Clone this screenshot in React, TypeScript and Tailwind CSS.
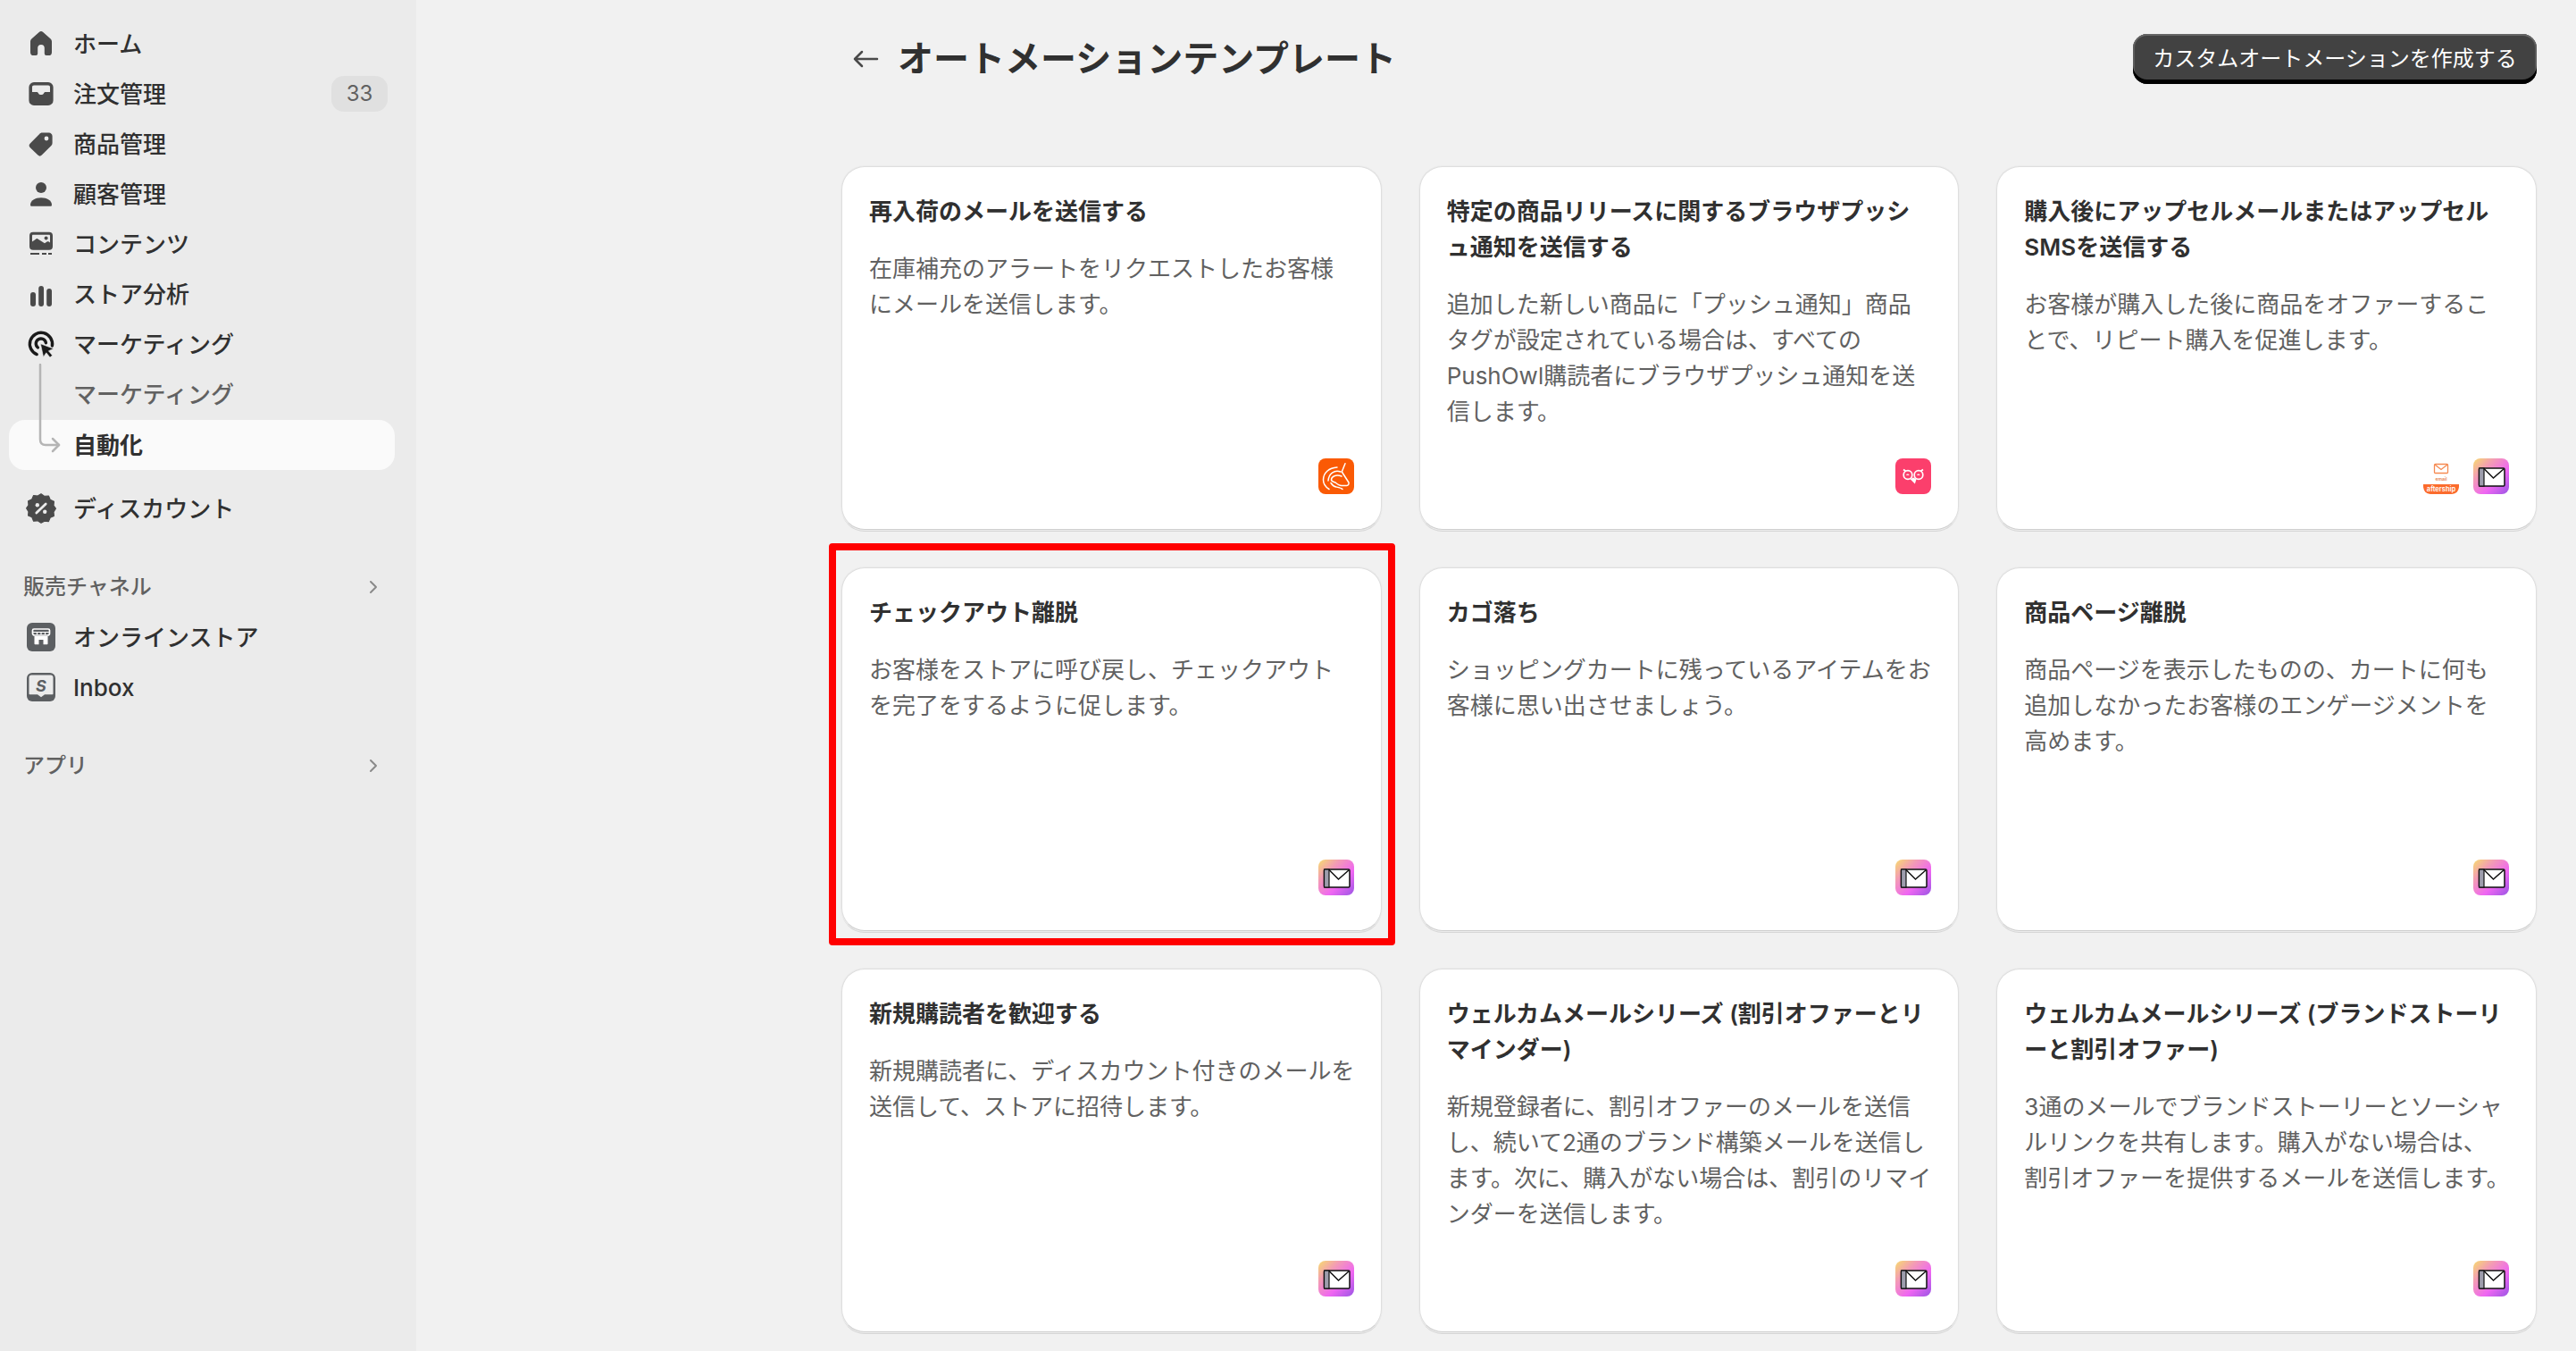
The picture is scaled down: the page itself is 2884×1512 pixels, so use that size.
import { ChevronRight } from "lucide-react";
import type { ReactNode } from "react";

const FONT = "font-['Inter','Noto_Sans_CJK_JP',sans-serif]";

function Glyph({ children, className = "text-[#4a4a4a]" }: { children: ReactNode; className?: string }) {
  return (
    <svg viewBox="0 0 20 20" className={`w-[40px] h-[40px] shrink-0 ${className}`} fill="currentColor">
      {children}
    </svg>
  );
}

const HomeIcon = () => (
  <Glyph>
    <path d="M8.9 3.5a1.7 1.7 0 0 1 2.2 0l4.1 3.6c.5.4.8 1 .8 1.7v5.9a1.8 1.8 0 0 1-1.8 1.8h-1.3a1 1 0 0 1-1-1v-3.1a1.9 1.9 0 0 0-3.8 0v3.1a1 1 0 0 1-1 1H5.8A1.8 1.8 0 0 1 4 14.7V8.8c0-.7.3-1.3.8-1.7z" />
  </Glyph>
);

const OrdersIcon = () => (
  <Glyph>
    <path
      fillRule="evenodd"
      d="M6 3.5h8a2.8 2.8 0 0 1 2.8 2.8v7.4a2.8 2.8 0 0 1-2.8 2.8H6a2.8 2.8 0 0 1-2.8-2.8V6.3A2.8 2.8 0 0 1 6 3.5zM5 9h2.5c.5 0 .8.3 1 .7.3.5.8.8 1.5.8s1.2-.3 1.5-.8c.2-.4.5-.7 1-.7H15V6.3c0-.6-.4-1-1-1H6c-.6 0-1 .4-1 1z"
    />
  </Glyph>
);

const TagIcon = () => (
  <Glyph>
    <path
      fillRule="evenodd"
      d="M16.3 5.7v3.8c0 .6-.2 1.1-.6 1.5l-5.3 5.3a1.6 1.6 0 0 1-2.2 0l-4.3-4.2a1.6 1.6 0 0 1 0-2.3l5.2-5.3c.4-.4.9-.7 1.5-.7h3.8c1 0 1.9.9 1.9 1.9zM13 8.2a1.2 1.2 0 1 0 0-2.4 1.2 1.2 0 0 0 0 2.4z"
    />
  </Glyph>
);

const PersonIcon = () => (
  <Glyph>
    <circle cx="10" cy="6.5" r="3" />
    <path d="M4 16.1c0-2.4 2.7-4 6-4s6 1.600 6 4c0 .5-.3.8-.8.8H4.800c-.5 0-.8-.3-.8-.8z" />
  </Glyph>
);

const ContentIcon = () => (
  <Glyph>
    <path
      fillRule="evenodd"
      d="M5.5 3.4h9a2 2 0 0 1 2 2v6a2 2 0 0 1-2 2h-9a2 2 0 0 1-2-2v-6a2 2 0 0 1 2-2zM5 8.7l2.2-1.500c.3-.2.7-.2 1 0L12 9.600l1.300-.8c.3-.2.7-.2 1 0l.7.5V5.500c0-.4-.2-.6-.5-.6h-9c-.3 0-.5.2-.5.6z"
    />
    <circle cx="12.800" cy="6.800" r="1" />
    <path d="M4 15h5v1H4zM10.500 15H13v1h-2.500zM14 15h2v1h-2z" />
  </Glyph>
);

const ChartIcon = () => (
  <Glyph>
    <rect x="4" y="9" width="3" height="8" rx="1.5" />
    <rect x="8.6" y="5.500" width="2.9" height="11.500" rx="1.450" />
    <rect x="13.100" y="7" width="2.900" height="10" rx="1.450" />
  </Glyph>
);

const MarketingIcon = () => (
  <svg viewBox="0 0 20 20" className="w-[40px] h-[40px] shrink-0 text-[#1a1a1a]" fill="none">
    <path d="M7.600 15.800a6.300 6.300 0 1 1 8.600-4.800" stroke="currentColor" strokeWidth="1.700" strokeLinecap="round" />
    <path d="M8.200 12a2.800 2.800 0 1 1 4.500-2.600" stroke="currentColor" strokeWidth="1.700" strokeLinecap="round" />
    <path d="M9.700 9.900l7.300 2.700-2.800 1.300 2.100 2.500-1.300 1.100-2.100-2.600-1.600 2.400z" fill="currentColor" stroke="#ebebeb" strokeWidth=".3" />
  </svg>
);

const DiscountIcon = () => (
  <Glyph>
    <path
      d="M10 2.800l1.900 1.300 2.300-.2.900 2.100 2.100 1-.2 2.300 1.200 1.700-1.200 1.900.2 2.200-2.100.9-.9 2.200-2.300-.2L10 19l-1.900-1.200-2.300.2-.9-2.200-2.100-.9.2-2.200-1.200-1.900L3 9.100l-.2-2.300 2.100-1 .9-2.100 2.300.2z"
      transform="translate(0 -.9)"
      stroke="currentColor"
      strokeWidth=".6"
      strokeLinejoin="round"
    />
    <path d="M12.600 7.500l-5.200 5" stroke="#ebebeb" strokeWidth="1.400" strokeLinecap="round" />
    <circle cx="7.900" cy="8.100" r="1.100" fill="#ebebeb" />
    <circle cx="12.100" cy="11.900" r="1.100" fill="#ebebeb" />
  </Glyph>
);

const StoreIcon = () => (
  <svg viewBox="0 0 32 32" className="w-[32px] h-[32px] shrink-0">
    <rect width="32" height="32" rx="6" fill="#5c5f62" />
    <path d="M6.500 8.500C6.500 7.600 7.100 7 8 7h16c.9 0 1.500.6 1.500 1.500v3.200c0 1.300-1 2.300-2.300 2.300H8.800c-1.300 0-2.300-1-2.300-2.300z" fill="none" stroke="#fff" strokeWidth="1.700" />
    <path d="M8.500 15v8.500c0 .5.300.8.800.8h4.200V19h5v5.300h4.200c.5 0 .8-.3.800-.8V15z" fill="#fff" />
    <path d="M7 10.500h18M11.500 10.500v3M16 10.500v3M20.500 10.500v3" stroke="#fff" strokeWidth="1.200" />
  </svg>
);

const InboxIcon = () => (
  <svg viewBox="0 0 32 32" className="w-[32px] h-[32px] shrink-0">
    <rect width="32" height="32" rx="6" fill="#5c5f62" />
    <path d="M5 2.500h22c1.400 0 2.500 1.100 2.500 2.500v18.500c0 .5-.3.8-.8.8H20l-4 3-4-3H3.300c-.5 0-.8-.3-.8-.8V5c0-1.400 1.100-2.500 2.500-2.500z" fill="#ebebeb" />
    <text x="16" y="20.500" textAnchor="middle" fontSize="18" fontWeight="700" fontStyle="italic" fill="#5c5f62" fontFamily="Inter, sans-serif">
      S
    </text>
  </svg>
);

const MailAppIcon = () => (
  <div className="w-[40px] h-[40px] rounded-[8px] bg-[linear-gradient(135deg,#f7dc6e_0%,#f39cb4_30%,#ef66f2_64%,#9a55e4_100%)] shrink-0">
    <svg viewBox="0 0 40 40" className="w-[40px] h-[40px]">
      <rect x="6.500" y="11" width="28.500" height="20" rx="1.200" fill="#fff" stroke="#111" strokeWidth="1.500" />
      <rect x="6.500" y="11" width="5.500" height="20" fill="#9d9dac" stroke="#111" strokeWidth="1.200" />
      <path d="M12 11.500l10.500 10.500 12-10.500" fill="none" stroke="#111" strokeWidth="1.500" />
    </svg>
  </div>
);

const RestockIcon = () => (
  <div className="w-[40px] h-[40px] rounded-[8px] bg-[#fa5a05] shrink-0">
    <svg viewBox="0 0 40 40" className="w-[40px] h-[40px]" fill="none" stroke="#fff" strokeWidth="1.500" strokeLinecap="round" strokeLinejoin="round">
      <path d="M30 5.700L26.300 15l7.700 12c.4 1.800-.6 3.500-2.200 3.500H26c-2.500 0-4.700-1.500-7-3.500-2.500-1-4.500-1.200-4.500-3 0-3.500 5-6.500 11.500-4" />
      <path d="M21 10C12 10.500 5.500 16 5.500 24c0 4.500 2.500 8 6.500 10.500" />
      <path d="M25 15c-7-2.500-13.500 2-14 10" />
      <path d="M14 27.500c1.500 2.500 3.500 4 6 4.500 3 .6 5.500 1 7 2.500" />
    </svg>
  </div>
);

const OwlIcon = () => (
  <div className="w-[40px] h-[40px] rounded-[8px] bg-[#fb3f6c] shrink-0">
    <svg viewBox="0 0 40 40" className="w-[40px] h-[40px]" fill="none" stroke="#fff" strokeWidth="1.700">
      <circle cx="14" cy="18.500" r="4.800" />
      <circle cx="26" cy="18.500" r="4.800" />
      <path d="M9 12.500l2.500 1.800M31 12.500l-2.500 1.800" />
      <path d="M18 23.500l3.500 3.500 1-3.200-2.500-1.300z" fill="#fff" />
      <path d="M12.500 18.800c.6-1 2-1 2.600 0M24.500 18.800c.6-1 2-1 2.600 0" strokeWidth="1.200" />
    </svg>
  </div>
);

const AftershipIcon = () => (
  <div className="w-[40px] h-[40px] rounded-[8px] overflow-hidden shrink-0">
    <svg viewBox="0 0 40 40" className="w-[40px] h-[40px]">
      <rect width="40" height="40" fill="#fff" />
      <rect x="12.500" y="6.500" width="15" height="10" rx="1" fill="none" stroke="#f58a52" strokeWidth="1.300" />
      <path d="M13 7l7 5.500L27 7" fill="none" stroke="#f58a52" strokeWidth="1.300" />
      <text x="20" y="24.500" textAnchor="middle" fontSize="5" fill="#e47f50" fontFamily="Inter, sans-serif" fontWeight="600">
        email
      </text>
      <path d="M0 29h40v4a7 7 0 0 1-7 7H7a7 7 0 0 1-7-7z" fill="#fb6b2c" />
      <text x="20" y="37" textAnchor="middle" fontSize="7.500" fill="#fff" fontFamily="Inter, sans-serif" fontWeight="600">
        aftership
      </text>
    </svg>
  </div>
);

function NavItem({ icon, label, badge }: { icon: ReactNode; label: string; badge?: string }) {
  return (
    <div className="h-[56px] flex items-center pl-[26px] pr-[32px]">
      {icon}
      <span className="ml-[16px] text-[26px] text-[#303030] font-medium">{label}</span>
      {badge && (
        <span className="ml-auto w-[63px] h-[40px] rounded-[14px] bg-[#e0e0e0] text-[#616161] text-[24px] flex items-center justify-center">
          {badge}
        </span>
      )}
    </div>
  );
}

function SectionHead({ label }: { label: string }) {
  return (
    <div className="mt-[32px] h-[56px] flex items-center pl-[26px] pr-[36px] justify-between">
      <span className="text-[24px] text-[#616161] font-medium">{label}</span>
      <ChevronRight className="w-[24px] h-[24px] text-[#8a8a8a]" strokeWidth={2} />
    </div>
  );
}

function Sidebar() {
  return (
    <aside className="w-[466px] shrink-0 bg-[#ebebeb] pt-[21px]">
      <NavItem icon={<HomeIcon />} label="ホーム" />
      <NavItem icon={<OrdersIcon />} label="注文管理" badge="33" />
      <NavItem icon={<TagIcon />} label="商品管理" />
      <NavItem icon={<PersonIcon />} label="顧客管理" />
      <NavItem icon={<ContentIcon />} label="コンテンツ" />
      <NavItem icon={<ChartIcon />} label="ストア分析" />
      <div className="relative">
        <NavItem icon={<MarketingIcon />} label="マーケティング" />
        <div className="h-[56px] flex items-center pl-[82px] text-[26px] text-[#616161] font-medium">マーケティング</div>
        <div className="h-[56px] mt-[1px] mx-[10px] w-[432px] rounded-[18px] bg-[#fafafa] flex items-center pl-[72px] text-[26px] text-[#303030] font-bold">
          自動化
        </div>
        {/* connector from the parent icon down to the active row */}
        <svg className="absolute left-[40px] top-[50px] w-[32px] h-[102px]" viewBox="0 0 32 102" fill="none" stroke="#b5b5b5" strokeWidth="2.500" strokeLinecap="round" strokeLinejoin="round">
          <path d="M5 1v84c0 4 2 6 6 6h15" />
          <path d="M19 84l7 7-7 7" />
        </svg>
      </div>
      <div className="mt-[15px]">
        <NavItem icon={<DiscountIcon />} label="ディスカウント" />
      </div>
      <SectionHead label="販売チャネル" />
      <div className="[&_svg]:mx-[4px]">
        <NavItem icon={<StoreIcon />} label="オンラインストア" />
        <NavItem icon={<InboxIcon />} label="Inbox" />
      </div>
      <SectionHead label="アプリ" />
    </aside>
  );
}

type Template = { title: string; desc: string; icons: ReactNode[]; marked?: boolean };

// descriptions carry their own line breaks, the kana kerning of the original doesn't wrap the same here
const templates: Template[] = [
  { title: "再入荷のメールを送信する", desc: "在庫補充のアラートをリクエストしたお客様\nにメールを送信します。", icons: [<RestockIcon key="r" />] },
  {
    title: "特定の商品リリースに関するブラウザプッシュ通知を送信する",
    desc: "追加した新しい商品に「プッシュ通知」商品\nタグが設定されている場合は、すべての\nPushOwl購読者にブラウザプッシュ通知を送\n信します。",
    icons: [<OwlIcon key="o" />],
  },
  {
    title: "購入後にアップセルメールまたはアップセルSMSを送信する",
    desc: "お客様が購入した後に商品をオファーするこ\nとで、リピート購入を促進します。",
    icons: [<AftershipIcon key="a" />, <MailAppIcon key="m" />],
  },
  { title: "チェックアウト離脱", desc: "お客様をストアに呼び戻し、チェックアウト\nを完了をするように促します。", icons: [<MailAppIcon key="m" />], marked: true },
  { title: "カゴ落ち", desc: "ショッピングカートに残っているアイテムをお\n客様に思い出させましょう。", icons: [<MailAppIcon key="m" />] },
  { title: "商品ページ離脱", desc: "商品ページを表示したものの、カートに何も\n追加しなかったお客様のエンゲージメントを\n高めます。", icons: [<MailAppIcon key="m" />] },
  { title: "新規購読者を歓迎する", desc: "新規購読者に、ディスカウント付きのメールを\n送信して、ストアに招待します。", icons: [<MailAppIcon key="m" />] },
  {
    title: "ウェルカムメールシリーズ (割引オファーとリマインダー)",
    desc: "新規登録者に、割引オファーのメールを送信\nし、続いて2通のブランド構築メールを送信し\nます。次に、購入がない場合は、割引のリマイ\nンダーを送信します。",
    icons: [<MailAppIcon key="m" />],
  },
  {
    title: "ウェルカムメールシリーズ (ブランドストーリーと割引オファー)",
    desc: "3通のメールでブランドストーリーとソーシャ\nルリンクを共有します。購入がない場合は、\n割引オファーを提供するメールを送信します。",
    icons: [<MailAppIcon key="m" />],
  },
];

function TemplateCard({ title, desc, icons, marked }: Template) {
  return (
    <div className="relative h-[407px] bg-white rounded-[26px] border border-[#dedede] border-b-[#cfcfcf] shadow-[0_0_0_1px_#ececec,0_2px_0_0_#d6d6d6] pt-[30px] pb-[39px] px-[30px] flex flex-col [line-break:loose]">
      <h3 className="text-[26px] leading-[40px] font-semibold text-[#303030]">{title}</h3>
      <p className="mt-[24px] text-[26px] leading-[40px] text-[#616161] whitespace-pre">{desc}</p>
      <div className="mt-auto flex justify-end gap-[16px]">{icons}</div>
      {marked && (
        <div className="absolute top-[-28px] bottom-[-17px] left-[-15px] right-[-16px] border-[8px] border-[#ff0000] rounded-[4px]" />
      )}
    </div>
  );
}

export default function App() {
  return (
    <div className={`${FONT} flex w-[2884px] h-[1512px] overflow-hidden bg-[#f1f1f1]`}>
      <Sidebar />
      <main className="flex-1 pl-[476px] pr-[44px] pt-[38px]">
        <header className="h-[56px] flex items-center justify-between pl-[7px]">
          <div className="flex items-center gap-[16px]">
            <svg viewBox="0 0 40 40" className="w-[40px] h-[40px]" fill="none" stroke="#4a4a4a" strokeWidth="2.500" strokeLinecap="round" strokeLinejoin="round">
              <path d="M33 20H8M16 12l-8 8 8 8" />
            </svg>
            <h1 className="text-[40px] font-bold text-[#303030]">オートメーションテンプレート</h1>
          </div>
          <button className="w-[452px] h-[56px] rounded-[16px] bg-[#424242] text-white text-[24px] font-normal shadow-[inset_0_-5px_0_0_#000,inset_0_2px_0_0_#666,inset_2px_0_0_0_#5c5c5c,inset_-2px_0_0_0_#5c5c5c]">
            カスタムオートメーションを作成する
          </button>
        </header>
        <div className="mt-[92px] grid grid-cols-3 gap-[42px]">
          {templates.map((t) => (
            <TemplateCard key={t.title} {...t} />
          ))}
        </div>
      </main>
    </div>
  );
}
